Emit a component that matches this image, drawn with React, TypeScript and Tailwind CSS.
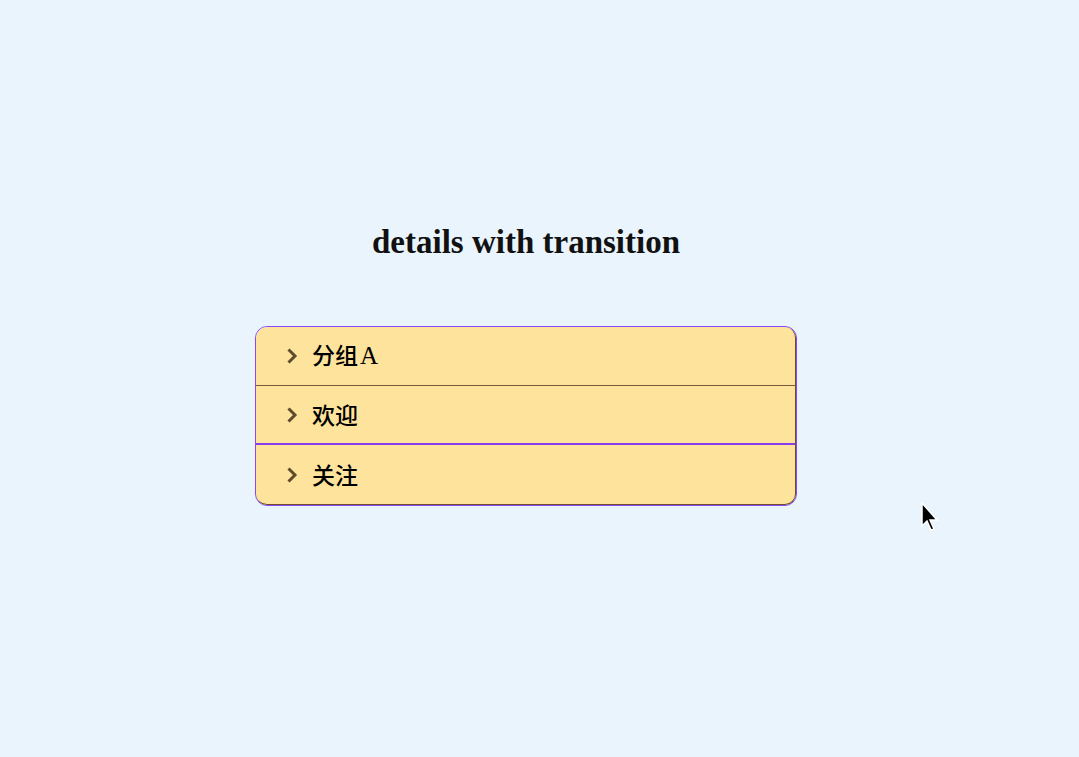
import React from "react";

const items = ["分组A", "欢迎", "关注"];

function Chevron() {
  return (
    <svg width="12" height="18" viewBox="0 0 12 18" className="shrink-0">
      <path d="M2.5 2.5 L9 9 L2.5 15.5" fill="none" stroke="#5e4c2c" strokeWidth="3" strokeLinecap="butt" strokeLinejoin="miter" />
    </svg>
  );
}

export default function App() {
  return (
    <div className="relative min-h-[757px] w-full bg-[#e9f4fc]" style={{ fontFamily: '"Liberation Serif", "Noto Sans CJK SC", serif' }}>
      <div className="w-[1052px] flex flex-col items-center">
        <h1 className="mt-[222px] text-[33px] leading-[40px] font-bold text-[#111]" style={{ fontFamily: '"Liberation Serif", serif' }}>
          details with transition
        </h1>
        <div className="mt-[64px] w-[542px] rounded-[12px] border border-[#8b46f5] overflow-hidden">
          <div className="rounded-[11px] border-r border-b border-[#6b4e2a] bg-[#fde39b] overflow-hidden">
            {items.map((t, i) => (
              <div
                key={t}
                className={
                  "h-[59px] flex items-center pl-[30px] gap-[14px] " +
                  (i === 0 ? "border-b border-[#7a5a3a]" : i === 1 ? "border-b-2 border-[#8a3cf0]" : "")
                }
              >
                <Chevron />
                <span className="text-[23px] font-medium text-black" style={{ fontFamily: '"Noto Sans CJK SC", "Liberation Serif", serif' }}>
                  {t.replace("A", "")}
                  {t.includes("A") && <span className="ml-[2px] text-[25px] font-normal" style={{ fontFamily: '"Liberation Serif", serif' }}>A</span>}
                </span>
              </div>
            ))}
          </div>
        </div>
      </div>
      <svg className="absolute left-[921px] top-[502px]" width="20" height="32" viewBox="0 0 20 32">
        <path d="M1 1 L1 24 L6 19 L10 28 L13 27 L9 18 L16 18 Z" fill="#000" stroke="#fff" strokeWidth="1.5" />
      </svg>
    </div>
  );
}
